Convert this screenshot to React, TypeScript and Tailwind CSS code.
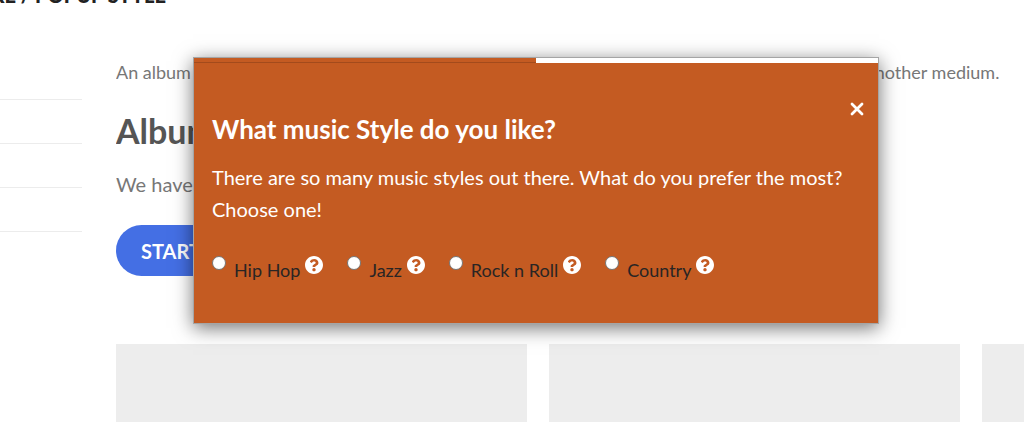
import React from "react";

const styles = ["Hip Hop", "Jazz", "Rock n Roll", "Country"];

function HelpIcon() {
  return (
    <svg viewBox="8 8 496 496" className="h-[18px] w-[18px]" aria-hidden="true">
      <path
        fill="#fff"
        d="M504 256c0 136.997-111.043 248-248 248S8 392.997 8 256C8 119.083 119.043 8 256 8s248 111.083 248 248zM262.655 90c-54.497 0-89.255 22.957-116.549 63.758-3.536 5.286-2.353 12.415 2.715 16.258l34.699 26.31c5.205 3.947 12.621 3.008 16.665-2.122 17.864-22.658 30.113-35.797 57.303-35.797 20.429 0 45.698 13.148 45.698 32.958 0 14.976-12.363 22.667-32.534 33.976C247.128 238.528 216 254.941 216 296v4c0 6.627 5.373 12 12 12h56c6.627 0 12-5.373 12-12v-1.333c0-28.462 83.186-29.647 83.186-106.667 0-58.002-60.165-102-116.531-102zM256 338c-25.365 0-46 20.635-46 46 0 25.364 20.635 46 46 46s46-20.636 46-46c0-25.365-20.635-46-46-46z"
      />
    </svg>
  );
}

function QuizPopup() {
  return (
    <section
      role="dialog"
      aria-labelledby="quiz-title"
      className="absolute top-[57px] right-[145px] left-[193px] border border-[#a5a5a5] bg-[#c45b22] pb-10 shadow-[0_4px_18px_rgba(0,0,0,0.55)]"
    >
      <div className="flex h-[5px] bg-white">
        <div className="w-1/2 border-b border-[#a34b1c] bg-[#c45b22]" />
      </div>
      <div className="flex items-start justify-between pt-[37px] pr-[14px] pl-[18px]">
        <h2 id="quiz-title" className="pt-3 text-[26px] leading-[34px] font-bold text-white">
          What music Style do you like?
        </h2>
        <button type="button" aria-label="Close" className="pt-[2px]">
          <svg viewBox="0 0 14 14" className="h-[14px] w-[14px]" aria-hidden="true">
            <path d="M2 2 12 12M12 2 2 12" stroke="#fff" strokeWidth="2.8" strokeLinecap="round" />
          </svg>
        </button>
      </div>
      <p className="px-[18px] pt-[15px] text-[20px] leading-8 text-white">
        There are so many music styles out there. What do you prefer the most? Choose one!
      </p>
      <div className="flex gap-6 px-[18px] pt-[31px]">
        {styles.map((name) => (
          <div key={name} className="flex items-start">
            <label className="flex items-start gap-2">
              <input
                type="radio"
                name="music-style"
                className="h-[14px] w-[14px] appearance-none rounded-full border border-[#767676] bg-white"
              />
              <span className="pt-[2px] pb-px text-[18px] leading-6 text-[#292524]">{name}</span>
            </label>
            <button type="button" aria-label={"About " + name} className="ml-[5px]">
              <HelpIcon />
            </button>
          </div>
        ))}
      </div>
    </section>
  );
}

export default function App() {
  return (
    <div className="relative h-screen overflow-hidden bg-white font-['Lato',sans-serif] text-[#777]">
      <header className="flex h-[7px] w-[166px] items-end justify-end">
        <h1 className="text-[20px] leading-6 font-black whitespace-nowrap text-[#222]">RE / POPUP STYLE</h1>
      </header>
      <div className="flex gap-[34px]">
        <aside className="w-[82px] shrink-0 pt-[49px]">
          <ul>
            <li className="h-11 border-b border-[#ececec]" />
            <li className="h-11 border-b border-[#ececec]" />
            <li className="h-11 border-b border-[#ececec]" />
            <li className="h-11 border-b border-[#ececec]" />
          </ul>
        </aside>
        <main className="min-w-0 flex-1 overflow-hidden pt-[51px]">
          <p className="text-[18px] leading-7 whitespace-nowrap">
            An album is a collection of audio recordings issued on compact discs (CDs), vinyl, audio tape, or another medium.
          </p>
          <h2 className="pt-6 text-[34px] leading-[42px] font-bold text-[#555]">Album</h2>
          <p className="pt-[18px] text-[20px] leading-7">We have</p>
          <button type="button" className="mt-[27px] h-[51px] rounded-full bg-[#446fe4] px-[25px] text-[20px] font-bold text-white">
            START NOW
          </button>
          <div className="mt-[68px] flex gap-[22px]">
            <div className="h-20 w-[411px] shrink-0 bg-[#ededed]" />
            <div className="h-20 w-[411px] shrink-0 bg-[#ededed]" />
            <div className="h-20 w-[411px] shrink-0 bg-[#ededed]" />
          </div>
        </main>
      </div>
      <QuizPopup />
    </div>
  );
}
